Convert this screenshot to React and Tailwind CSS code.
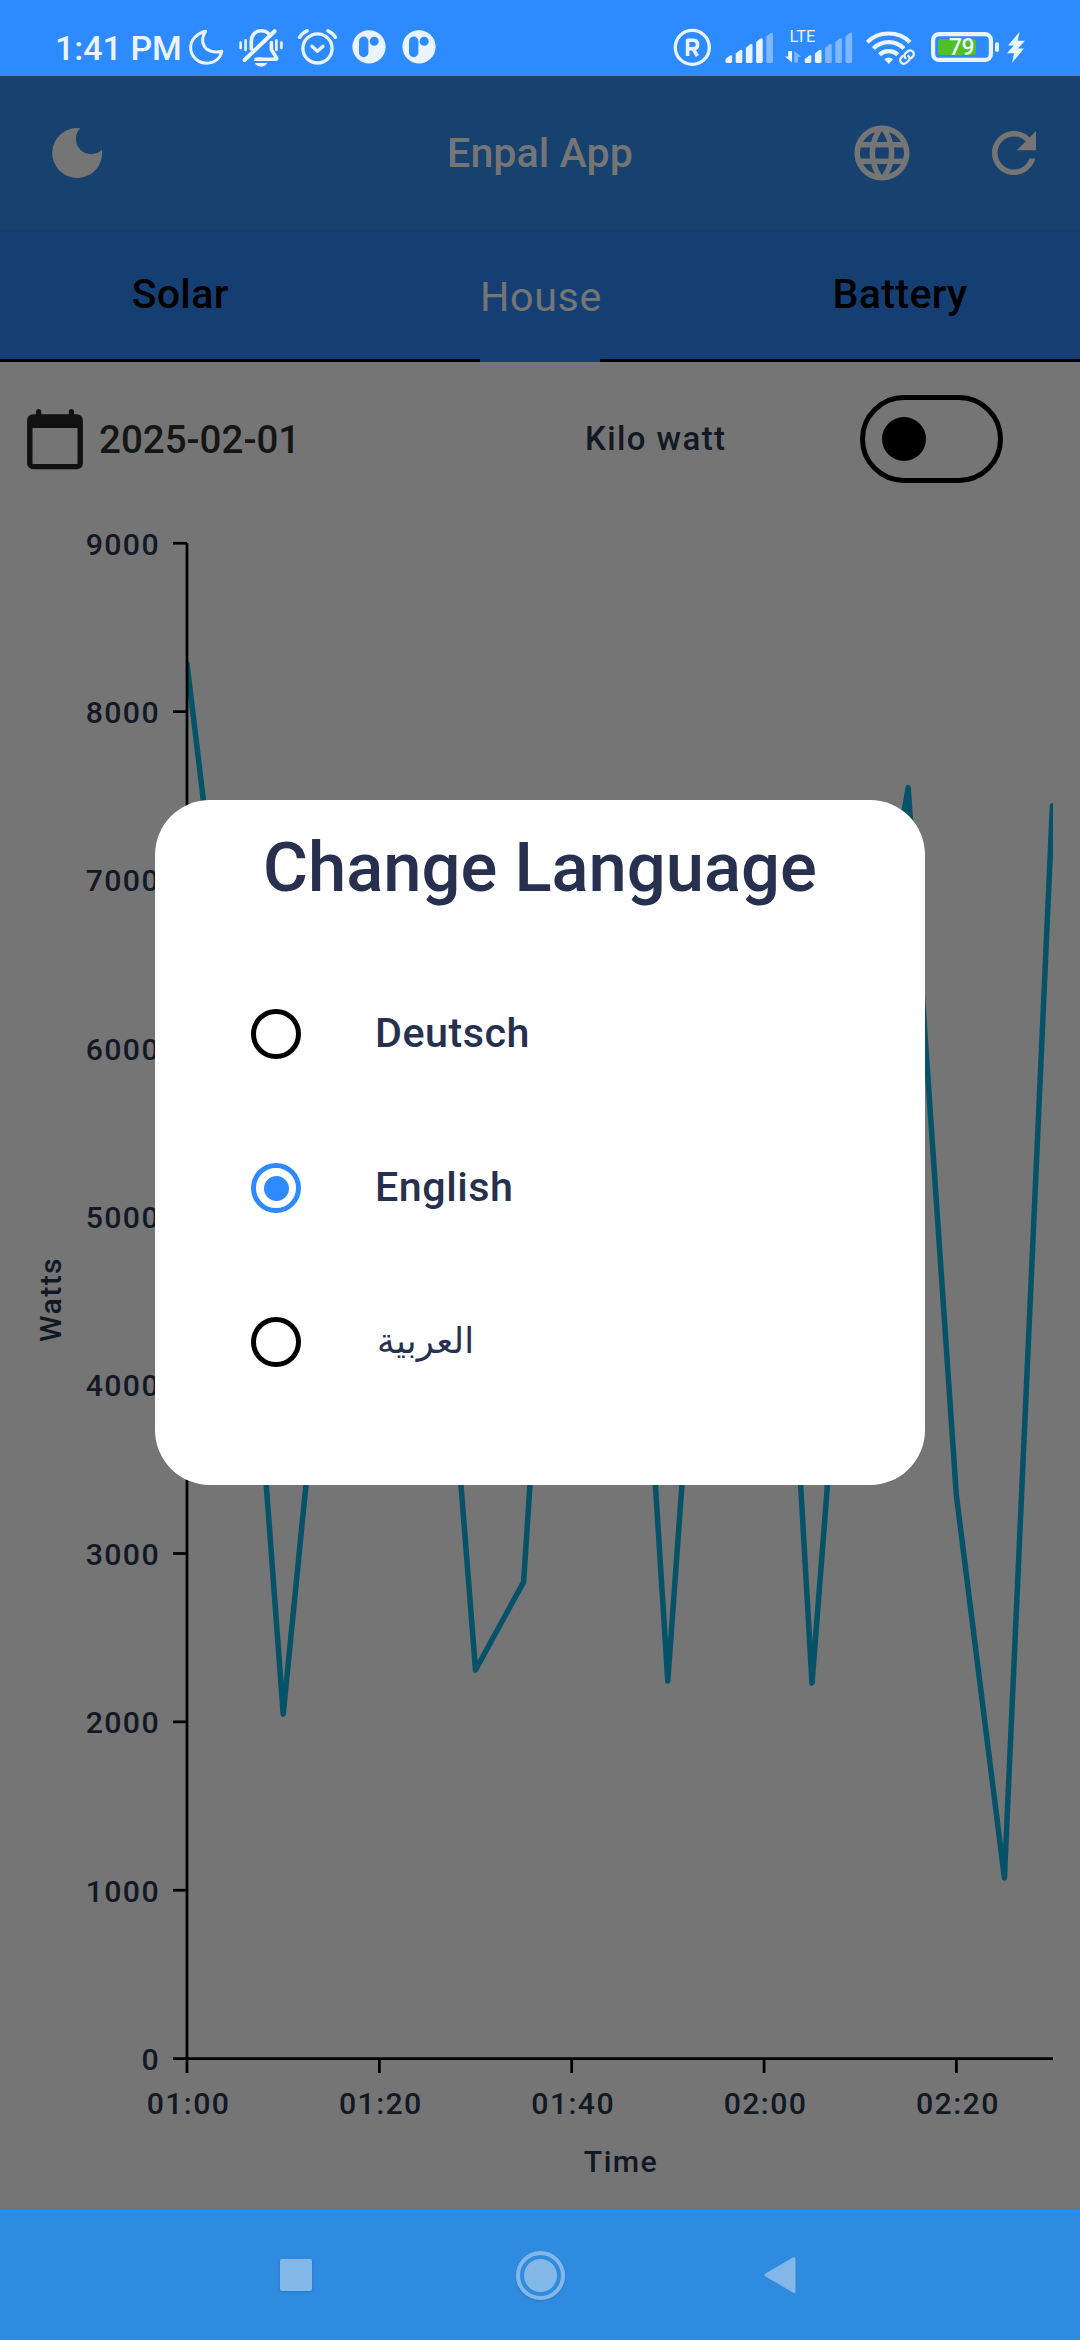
const INK = '#e9f4ff';
const BLUE = '#2e8bff';

/* ---------- status bar glyphs: each viewBox is a 76px tall slice of the bar ---------- */
function Slice({ x, w, children }) {
  return (
    <svg width={w} height="76" viewBox={`${x} 0 ${w} 76`} fill="none" className="shrink-0 overflow-visible">
      {children}
    </svg>
  );
}

function PLogo() {
  return (
    <svg width="34" height="76" viewBox="352 0 34 76" className="shrink-0">
      <circle cx="369" cy="46.8" r="16.6" fill={INK} />
      <rect x="359" y="36.6" width="9.4" height="20.6" rx="4.7" fill={BLUE} />
      <circle cx="374.2" cy="41.3" r="4.5" fill={BLUE} />
    </svg>
  );
}

function Bars({ x, solid }) {
  const tops = [55, 49.6, 43.8, 38, 32.4];
  return tops.map((t, i) => {
    const l = x + i * 10.2;
    return (
      <path
        key={i}
        d={`M${l} ${t + 4} L${l + 4.4} ${t + 0.5} Q${l + 6.6} ${t - 0.6} ${l + 6.6} ${t + 1.6} V61.6 Q${l + 6.6} 63 ${l + 5.2} 63 H${l + 1.4} Q${l} 63 ${l} 61.6 Z`}
        fill={i < solid ? INK : '#7fb8ff'}
      />
    );
  });
}

function StatusBar() {
  return (
    <div className="flex h-[76px] shrink-0 items-start bg-[#2e8bff]">
      <div className="ml-[55px] w-[134px] whitespace-nowrap pt-[28px] text-[34px] font-medium leading-[40px] text-[#e9f4ff]">
        1:41 PM
      </div>
      <Slice x={189} w={50}>
        <path
          d="M205.6 31.3 C197 33.5 190.6 39.6 190.6 47.6 A15.9 15.9 0 0 0 206.5 63.2 C214.5 63.2 220.5 58.5 221.8 51.2 C214 53.4 207 51 204.2 46 C201.5 41.5 202.6 36 205.6 31.3 Z"
          stroke={INK}
          strokeWidth="3"
          strokeLinejoin="round"
        />
      </Slice>
      <Slice x={239} w={59}>
        <g stroke={INK} strokeLinecap="round">
          <path d="M240.6 42.5 V48 M281.4 42.5 V48" strokeWidth="2.6" />
          <path d="M245.6 40.4 V50 M276.4 40.4 V50" strokeWidth="2.6" />
          <path d="M251.3 49 V41.5 C251.3 35 255.5 30.8 261 30.8 C264 30.8 266.8 31.8 268.6 33.6" strokeWidth="3.6" />
          <path d="M244.6 60 L274.6 31.2" strokeWidth="4" />
          <path d="M271.4 42.5 V49.6 L276.4 57.6 Q277.3 59.3 275.6 59.3 H256" strokeWidth="3.6" strokeLinejoin="round" />
        </g>
        <path d="M253.5 61 L257.5 57.5 H262 V61 Z M254.8 63 H267.2 C265.8 65.6 263.6 66.8 261 66.8 C258.4 66.8 256.2 65.6 254.8 63 Z" fill={INK} />
      </Slice>
      <Slice x={298} w={54}>
        <g stroke={INK} strokeLinecap="round" strokeLinejoin="round">
          <circle cx="317.5" cy="48.4" r="14.6" strokeWidth="3.3" />
          <path d="M312 46.2 L317.4 51.2 L323 46.2" strokeWidth="3.3" />
          <path d="M299.6 37.2 C301.4 34.4 304 32 307 30.8 M328 30.8 C331 32 333.6 34.4 335.4 37.2" strokeWidth="3.6" />
        </g>
      </Slice>
      <div className="flex gap-4">
        <PLogo />
        <PLogo />
      </div>

      <div className="ml-auto flex pr-[54px]">
        <Slice x={673} w={52}>
          <circle cx="692.3" cy="47.4" r="17" stroke={INK} strokeWidth="3.3" />
          <path d="M687.6 56 V40.3 H693.5 Q697.6 40.3 697.6 44.6 Q697.6 48.8 693.5 48.8 H687.6 M693 48.8 L697.4 56" stroke={INK} strokeWidth="3.6" strokeLinejoin="round" />
        </Slice>
        <Slice x={725} w={60}>
          <Bars x={725.5} solid={4} />
        </Slice>
        <Slice x={785} w={81}>
          <text x="789.5" y="42" fill={INK} fontSize="16" textLength="26" lengthAdjust="spacingAndGlyphs">LTE</text>
          <path d="M788.2 51 H792 V62.4 L785 56.6 H788.2 Z" fill={INK} />
          <path d="M794.2 51 L801.2 56.8 H798 V62.4 H794.2 Z" fill="#7fb8ff" />
          <Bars x={804.7} solid={2} />
        </Slice>
        <Slice x={866} w={65}>
          <g stroke={INK} strokeWidth="4.2">
            <path d="M867.3 42.2 C878.5 30.6 898.7 30.6 910 42.2" />
            <path d="M873.4 48.4 C882 40 895.4 40 904 48.4" />
            <path d="M879.6 54.8 C884.6 50 892.8 50 897.8 54.8" />
          </g>
          <path d="M884.4 59.3 Q888.7 55.6 893 59.3 L888.7 64 Z" fill={INK} />
          <g stroke={INK} strokeWidth="2.2" strokeLinecap="round">
            <path d="M905.6 58.2 C903.8 56.4 904.2 54.6 905.4 53.4 L907.6 51.4 C909.2 50 911.4 50.2 912.8 51.6 C914.2 53 914.2 55.2 912.8 56.6 L911.2 58.2" />
            <path d="M908.4 56 C910.2 57.8 909.8 59.6 908.6 60.8 L906.4 62.8 C904.8 64.2 902.6 64 901.2 62.6 C899.8 61.2 899.8 59 901.2 57.6 L902.8 56" />
          </g>
        </Slice>
        <Slice x={931} w={95}>
          <rect x="933.1" y="34.1" width="57.8" height="25.8" rx="6" stroke={INK} strokeWidth="4.2" />
          <rect x="938" y="39" width="38" height="16" rx="2.5" fill="#4fbf2a" />
          <rect x="995" y="42.2" width="4" height="9.6" rx="1.5" fill={INK} />
          <text x="949" y="55.4" fill={INK} fontSize="23" fontWeight="500" textLength="25.5">79</text>
          <path d="M1019.6 32 L1008 45.4 H1013.8 L1007 53.2 H1014 L1012 63 L1024 48.6 H1018 L1025 40.8 H1017.6 Z" fill={INK} />
        </Slice>
      </div>
    </div>
  );
}

/* ---------- app header ---------- */
function Header() {
  return (
    <div className="grid h-[154px] shrink-0 grid-cols-3 items-center bg-[#17416f] text-[#757575]">
      <svg width="52" height="52" viewBox="51 127 52 52" className="ml-[51px]">
        <path d="M80.3 128.2 A25 25 0 1 0 102 149.6 A15 15 0 1 1 80.3 128.2 Z" fill="currentColor" />
      </svg>
      <div className="pt-[2px] text-center text-[41.25px] font-medium leading-none">Enpal App</div>
      <div className="flex items-center justify-end gap-[66px] pr-[33px]">
        <svg width="66" height="66" viewBox="0 0 24 24" fill="currentColor">
          <path d="M11.99 2C6.47 2 2 6.48 2 12s4.47 10 9.99 10C17.52 22 22 17.52 22 12S17.52 2 11.99 2zm6.93 6h-2.95a15.65 15.65 0 0 0-1.38-3.56A8.03 8.03 0 0 1 18.92 8zM12 4.04c.83 1.2 1.48 2.53 1.91 3.96h-3.82c.43-1.43 1.08-2.76 1.91-3.96zM4.26 14C4.1 13.36 4 12.69 4 12s.1-1.36.26-2h3.38c-.08.66-.14 1.32-.14 2s.06 1.34.14 2H4.26zm.82 2h2.95c.32 1.25.78 2.45 1.38 3.56A7.987 7.987 0 0 1 5.08 16zm2.95-8H5.08a7.987 7.987 0 0 1 4.33-3.56A15.65 15.65 0 0 0 8.03 8zM12 19.96c-.83-1.2-1.48-2.53-1.91-3.96h3.82c-.43 1.43-1.08 2.76-1.91 3.96zM14.34 14H9.66c-.09-.66-.16-1.32-.16-2s.07-1.35.16-2h4.68c.09.65.16 1.32.16 2s-.07 1.34-.16 2zm.25 5.56c.6-1.11 1.06-2.31 1.38-3.56h2.95a8.03 8.03 0 0 1-4.33 3.56zM16.36 14c.08-.66.14-1.32.14-2s-.06-1.34-.14-2h3.38c.16.64.26 1.31.26 2s-.1 1.36-.26 2h-3.38z" />
        </svg>
        <svg width="66" height="66" viewBox="0 0 24 24" fill="currentColor">
          <path d="M17.65 6.35A7.958 7.958 0 0 0 12 4c-4.42 0-7.99 3.58-7.99 8s3.57 8 7.99 8c3.73 0 6.84-2.55 7.73-6h-2.08A5.99 5.99 0 0 1 12 18c-3.31 0-6-2.69-6-6s2.69-6 6-6c1.66 0 3.14.69 4.22 1.78L13 11h7V4l-2.35 2.35z" />
        </svg>
      </div>
    </div>
  );
}

function Tabs() {
  return (
    <div className="grid h-[132px] shrink-0 grid-cols-3 bg-[#153f73] text-[41.25px] leading-[48px]">
      <div className="border-b-[3px] border-black pt-[40px] text-center font-medium tracking-[0.3px] text-black">Solar</div>
      <div className="flex">
        <div className="flex-1 border-b-[3px] border-black" />
        <div className="w-[120px] whitespace-nowrap pt-[43px] text-center tracking-[0.6px] text-[#757575]">House</div>
        <div className="flex-1 border-b-[3px] border-black" />
      </div>
      <div className="border-b-[3px] border-black pt-[40px] text-center font-medium tracking-[0.3px] text-black">Battery</div>
    </div>
  );
}

function Controls() {
  return (
    <div className="flex h-[154px] shrink-0 items-center">
      <svg width="56" height="62" viewBox="27 408 56 62" className="ml-[27px]" fill="none">
        <rect x="29.8" y="417" width="50.4" height="49.6" rx="3.4" stroke="#111" strokeWidth="5.4" />
        <path d="M28 420 Q28 415 32 415 H78 Q82 415 82 420 V428 H28 Z" fill="#111" />
        <path d="M38.6 418 V411.6 M71.4 418 V411.6" stroke="#111" strokeWidth="5.2" strokeLinecap="round" />
      </svg>
      <div className="ml-[16px] w-[486px] pt-[2px] text-[38.5px] font-medium leading-[48px] text-[#161616]">2025-02-01</div>
      <div className="w-[275px] whitespace-nowrap text-[33px] font-medium leading-[40px] tracking-[1.4px] text-[#121824]">Kilo watt</div>
      <div className="flex h-[88px] w-[143px] items-center rounded-full border-[5.5px] border-black pl-[17px]">
        <div className="size-[44px] rounded-full bg-black" />
      </div>
    </div>
  );
}

/* ---------- chart ---------- */
const STEP = 168.37;
const Y_TICKS = [9000, 8000, 7000, 6000, 5000, 4000, 3000, 2000, 1000, 0];
const X_TICKS = ['01:00', '01:20', '01:40', '02:00', '02:20'];
const POINTS = [
  [187, 664], [235.1, 1064], [283.2, 1714], [331.3, 1230], [379.3, 1130], [427.4, 1057], [475.5, 1670],
  [523.6, 1582], [571.6, 850], [619.7, 921], [667.8, 1681], [715.9, 1013], [764, 845], [812, 1683],
  [860.1, 1068], [908.2, 787.6], [956.3, 1494.6], [1004.4, 1878], [1052.4, 806],
];

function Chart() {
  const yOf = (v) => 2058.6 - (v / 1000) * STEP;
  return (
    <svg width="1080" height="1694" viewBox="0 516 1080 1694" className="shrink-0" fill="none">
      <defs>
        <clipPath id="plot">
          <rect x="187" y="516" width="866" height="1543" />
        </clipPath>
      </defs>
      <polyline
        points={POINTS.map((p) => p.join(',')).join(' ')}
        clipPath="url(#plot)"
        stroke="#065268"
        strokeWidth="5.5"
        strokeLinejoin="round"
        strokeLinecap="round"
      />
      <g stroke="#000" strokeWidth="2.75">
        <path d="M187 543.3 V2058.6 M187 2058.6 H1053" />
        {Y_TICKS.map((v) => (
          <path key={v} d={`M173 ${yOf(v)} H187`} />
        ))}
        {X_TICKS.map((t, i) => (
          <path key={t} d={`M${187 + i * 192.35} 2058.6 V2073`} />
        ))}
      </g>
      <g fill="#121824" fontSize="30.25" fontWeight="500" letterSpacing="1.4">
        {Y_TICKS.map((v) => (
          <text key={v} x="160" y={yOf(v) + 11.3} textAnchor="end">{v}</text>
        ))}
        {X_TICKS.map((t, i) => (
          <text key={t} x={188.5 + i * 192.35} y="2114" textAnchor="middle">{t}</text>
        ))}
        <text x="621" y="2172" textAnchor="middle">Time</text>
        <text x="0" y="0" textAnchor="middle" transform="translate(60.5 1299.5) rotate(-90)">Watts</text>
      </g>
    </svg>
  );
}

/* ---------- dialog ---------- */
function Option({ label, checked, arabic }) {
  return (
    <div className="flex h-[154px] items-center">
      <div
        className={
          checked
            ? 'ml-[96px] flex size-[50px] items-center justify-center rounded-full border-[5.5px] border-[#2e8bff]'
            : 'ml-[96px] size-[50px] rounded-full border-[5.5px] border-black'
        }
      >
        {checked && <div className="size-[25px] rounded-full bg-[#2e8bff]" />}
      </div>
      <div
        className={
          arabic
            ? "ml-[76px] pb-[2px] font-['DejaVu_Sans',sans-serif] text-[35.5px] leading-[48px] text-[#27314f]"
            : 'ml-[74px] pb-[3px] text-[41.25px] font-medium leading-[48px] tracking-[0.5px] text-[#27314f]'
        }
      >
        {label}
      </div>
    </div>
  );
}

function LanguageDialog() {
  return (
    <div className="absolute left-[155px] top-[800px] h-[685px] w-[770px] rounded-[55px] bg-white">
      <div className="h-[157px] whitespace-nowrap pt-[26px] text-center text-[68.75px] font-medium leading-[84px] text-[#27314f]">
        Change Language
      </div>
      <Option label="Deutsch" />
      <Option label="English" checked />
      <Option label="العربية" arabic />
    </div>
  );
}

function NavBar() {
  return (
    <div className="flex h-[130px] shrink-0 items-center border-t-[3px] border-[#2e8bff] bg-[#2e8bdf] pb-[3px]">
      <div className="ml-[280px] size-[32px] rounded-[2px] bg-[#83b7e8] shadow-[0_1px_2px_rgba(0,0,0,0.15)]" />
      <div className="ml-[204px] flex size-[49px] items-center justify-center rounded-full border-4 border-[#83b7e8] shadow-[0_1px_2px_rgba(0,0,0,0.15)]">
        <div className="size-[33px] rounded-full bg-[#83b7e8]" />
      </div>
      <svg width="32" height="38" viewBox="0 0 32 38" className="ml-[199px]">
        <path d="M2 19 L30 2.5 V35.5 Z" fill="#83b7e8" stroke="#83b7e8" strokeWidth="3" strokeLinejoin="round" />
      </svg>
    </div>
  );
}

export default function App() {
  return (
    <div className="relative flex h-[2340px] w-[1080px] flex-col overflow-hidden bg-[#757575] font-['Roboto','Noto_Sans',sans-serif]">
      <StatusBar />
      <Header />
      <Tabs />
      <Controls />
      <Chart />
      <NavBar />
      <LanguageDialog />
    </div>
  );
}
